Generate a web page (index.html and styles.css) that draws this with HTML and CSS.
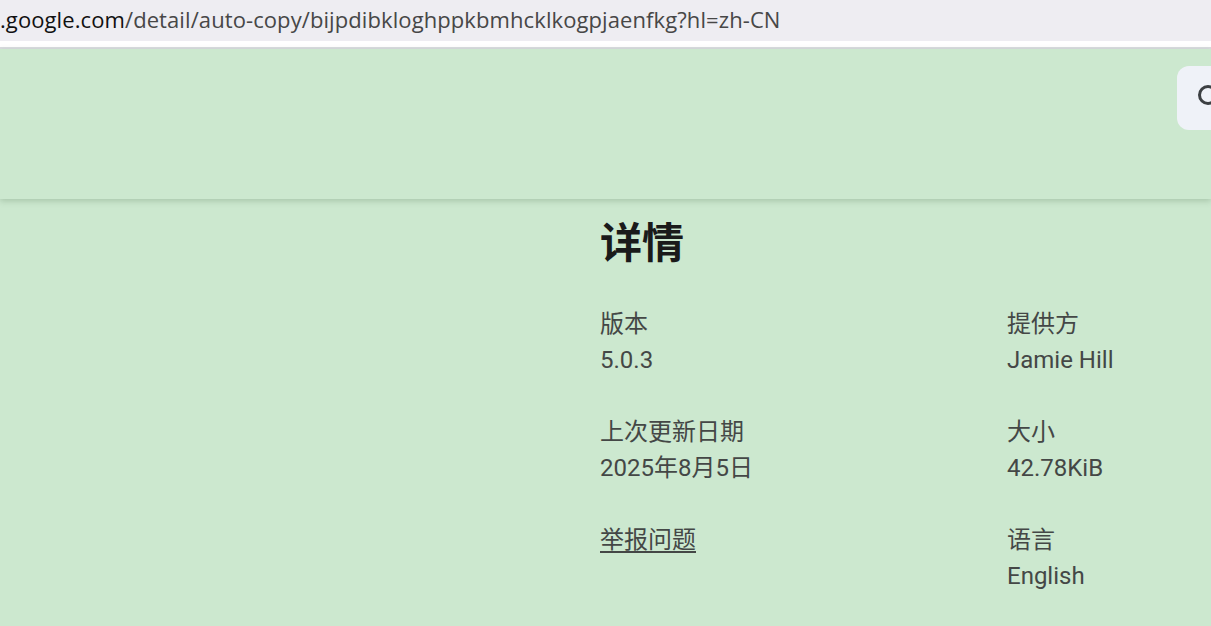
FILE: index.html
```html
<!DOCTYPE html>
<html lang="zh-CN">
<head>
<meta charset="utf-8">
<title>详情</title>
<link rel="stylesheet" href="styles.css">
</head>
<body>
<div class="urlbar"><span class="domain">.google.com</span><span class="path">/detail/auto-copy/bijpdibkloghppkbmhcklkogpjaenfkg?hl=zh-CN</span></div>
<div class="chrome-edge"></div>
<header class="header">
  <div class="search">
    <svg class="search-icon" width="40" height="40" viewBox="0 0 40 40"><circle cx="31" cy="16" r="8.5" fill="none" stroke="#3c4043" stroke-width="3"/></svg>
  </div>
</header>
<main class="main">
  <h2 class="title">详情</h2>
  <div class="details">
    <div class="item"><div class="label">版本</div><div class="value">5.0.3</div></div>
    <div class="item"><div class="label">提供方</div><div class="value">Jamie Hill</div></div>
    <div class="item"><div class="label">上次更新日期</div><div class="value">2025年8月5日</div></div>
    <div class="item"><div class="label">大小</div><div class="value">42.78KiB</div></div>
    <div class="item"><a class="report" href="#">举报问题</a></div>
    <div class="item"><div class="label">语言</div><div class="value">English</div></div>
  </div>
</main>
</body>
</html>
```
FILE: styles.css
```css
html, body {
  margin: 0;
  padding: 0;
  height: 100%;
}
body {
  background: #cce8cf;
  font-family: Roboto, "Noto Sans CJK SC", sans-serif;
  overflow: hidden;
}
.urlbar {
  height: 41px;
  background: #eeedf2;
  font-family: "Open Sans", "Noto Sans", sans-serif;
  font-size: 22px;
  line-height: 38px;
  white-space: nowrap;
  letter-spacing: 0.09px;
}
.domain { color: #111; }
.path { color: #474747; }
.chrome-edge {
  height: 6px;
  background: #ffffff;
  border-bottom: 2px solid #dadce0;
}
.header {
  height: 150px;
  background: #cce8cf;
  display: flex;
  justify-content: flex-end;
  align-items: flex-start;
  box-shadow: 0 2px 6px rgba(60, 90, 60, 0.25);
  position: relative;
  z-index: 1;
}
.search {
  margin-top: 17px;
  width: 34px;
  height: 64px;
  background: #eff2f8;
  border-radius: 12px 0 0 12px;
  display: flex;
  align-items: center;
  overflow: hidden;
}
.search-icon {
  flex: none;
  margin-left: 0;
  margin-top: 2px;
}
.main {
  padding-left: 600px;
  padding-top: 20px;
}
.title {
  margin: 0 0 37px;
  font-size: 42px;
  line-height: 50px;
  font-weight: 700;
  color: #1a1a1a;
  font-family: Roboto, "Noto Sans CJK SC", sans-serif;
}
.details {
  display: grid;
  grid-template-columns: 407px auto;
  row-gap: 36px;
}
.label, .value, .report {
  font-size: 24px;
  line-height: 36px;
  color: #444746;
}
.report {
  text-decoration: underline;
  text-underline-offset: 3px;
  text-decoration-thickness: 2px;
}
```
